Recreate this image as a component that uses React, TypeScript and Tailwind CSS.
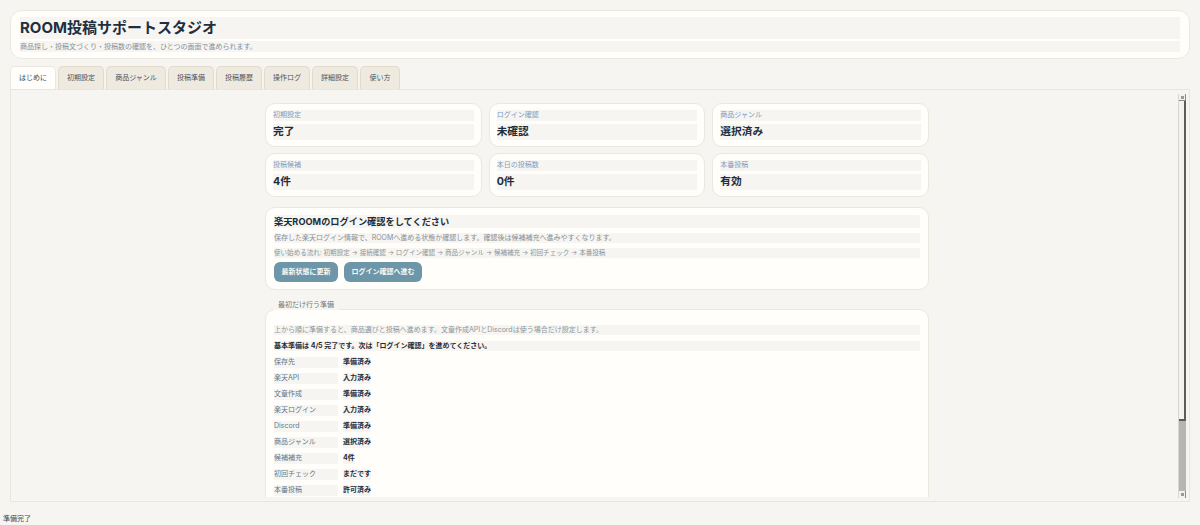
const FONT = "font-['Inter','Noto_Sans_CJK_JP',sans-serif]";

const stats = [
  ["初期設定", "完了"],
  ["ログイン確認", "未確認"],
  ["商品ジャンル", "選択済み"],
  ["投稿候補", "4件"],
  ["本日の投稿数", "0件"],
  ["本番投稿", "有効"],
];

const rows = [
  ["保存先", "準備済み"],
  ["楽天API", "入力済み"],
  ["文章作成", "準備済み"],
  ["楽天ログイン", "入力済み"],
  ["Discord", "準備済み"],
  ["商品ジャンル", "選択済み"],
  ["候補補充", "4件"],
  ["初回チェック", "まだです"],
  ["本番投稿", "許可済み"],
];

const tabs = [
  ["はじめに", "w-[46px]"],
  ["初期設定", "w-[46px]"],
  ["商品ジャンル", "w-[60px]"],
  ["投稿準備", "w-[46px]"],
  ["投稿履歴", "w-[46px]"],
  ["操作ログ", "w-[46px]"],
  ["詳細設定", "w-[46px]"],
  ["使い方", "w-[40px]"],
];

function Stat({ label, value }: { label: string; value: string }) {
  return (
    <div className="h-[44px] rounded-[10px] border border-[#ebe8df] bg-[#fffefb] px-[7px] pt-[6px]">
      <div className="h-[11px] bg-[#f6f5f1] text-[7px] leading-[9px] text-[#7f9cc2]">{label}</div>
      <div className="mt-[3px] h-[16px] bg-[#f6f5f1] text-[10.7px] font-bold leading-[16px] text-[#1e2d3b]">{value}</div>
    </div>
  );
}

export default function App() {
  return (
    <div className={`${FONT} flex h-[525px] w-[1200px] flex-col overflow-hidden bg-[#f6f5f1]`}>
      <header className="mx-[10px] mt-[10px] h-[49px] rounded-[12px] border border-[#ebe8df] bg-[#fffefb] px-[9px] pt-[6px]">
        <h1 className="h-[22px] bg-[#f6f5f1] text-[15px] font-bold leading-[22px] text-[#1e2f40]">ROOM投稿サポートスタジオ</h1>
        <p className="mt-[2px] h-[11px] bg-[#f6f5f1] text-[7px] leading-[11px] text-[#87909a]">
          商品探し・投稿文づくり・投稿数の確認を、ひとつの画面で進められます。
        </p>
      </header>

      <nav className="mx-[10px] mt-[7px] flex h-[23px] items-end gap-[2px]">
        {tabs.map(([t, w], i) => (
          <div
            key={t}
            className={`${w} flex items-center justify-center rounded-t-[5px] border border-b-0 text-[7px] ${
              i === 0
                ? "h-[23px] border-[#ebe8df] bg-[#fffefb] text-[#3a4650]"
                : "h-[23px] border-[#e2dbc9] bg-[#efeadf] text-[#4b5661]"
            }`}
          >
            {t}
          </div>
        ))}
      </nav>

      <main className="relative mx-[10px] h-[413px] border border-[#e9e6dc] bg-[#f6f5f1]">
        <div className="h-[407px] overflow-hidden">
          <div className="ml-[254px] flex w-[664px] flex-col pt-[13px]">
            <div className="grid grid-cols-3 gap-x-[7px] gap-y-[6px]">
              {stats.map(([l, v]) => (
                <Stat key={l} label={l} value={v} />
              ))}
            </div>

            <section className="mt-[10px] h-[83px] rounded-[10px] border border-[#ebe8df] bg-[#fffefb] px-[8px] pt-[7px]">
              <h2 className="h-[13px] bg-[#f6f5f1] text-[9.2px] font-bold leading-[13px] text-[#1e2d3b]">楽天ROOMのログイン確認をしてください</h2>
              <p className="mt-[5px] h-[10px] bg-[#f6f5f1] text-[7px] leading-[10px] text-[#87909a]">
                保存した楽天ログイン情報で、ROOMへ進める状態か確認します。確認後は候補補充へ進みやすくなります。
              </p>
              <p className="mt-[5px] h-[10px] bg-[#f6f5f1] text-[6.56px] leading-[10px] text-[#8d959c]">
                使い始める流れ: 初期設定 → 接続確認 → ログイン確認 → 商品ジャンル → 候補補充 → 初回チェック → 本番投稿
              </p>
              <div className="mt-[4px] flex gap-[6px]">
                <button className="h-[20px] w-[64px] rounded-[6px] bg-[#6d97a8] text-[7px] font-bold text-[#f8f8f4]">最新状態に更新</button>
                <button className="h-[20px] w-[78px] rounded-[6px] bg-[#6d97a8] text-[7px] font-bold text-[#f8f8f4]">ログイン確認へ進む</button>
              </div>
            </section>

            <div className="relative mt-[19px] h-[230px] rounded-t-[10px] border border-[#ebe8df] bg-[#fffefb] px-[8px] pt-[15px]">
              <div className="absolute -top-[10px] left-[7px] h-[10px] bg-[#f6f5f1] px-[5px] text-[7px] leading-[10px] text-[#6f7780]">最初だけ行う準備</div>
              <p className="h-[10px] bg-[#f6f5f1] text-[7px] leading-[10px] text-[#8d959c]">
                上から順に準備すると、商品選びと投稿へ進めます。文章作成APIとDiscordは使う場合だけ設定します。
              </p>
              <p className="mt-[6px] h-[10px] bg-[#f6f5f1] text-[7px] font-bold leading-[10px] text-[#1e2d3b]">
                基本準備は 4/5 完了です。次は「ログイン確認」を進めてください。
              </p>
              <div className="mt-[6px] flex flex-col gap-[5px]">
                {rows.map(([l, v]) => (
                  <div key={l} className="flex h-[11px] gap-[5px]">
                    <div className="w-[64px] bg-[#f6f5f1] text-[7px] leading-[9px] text-[#64778d]">{l}</div>
                    <div className="bg-[#f6f5f1] text-[7px] font-bold leading-[9px] text-[#1e2d3b]">{v}</div>
                  </div>
                ))}
              </div>
            </div>
          </div>
        </div>

        <div className="absolute right-[3px] top-[4px] flex h-[404px] w-[8px] flex-col border-l border-[#d6d6d2] bg-[#b5b5b3]">
          <div className="flex h-[7px] items-center justify-center border-r border-b border-[#8a8a8a] bg-[#f3f2ee]">
            <div className="size-[3px] bg-[#9a9a98]" />
          </div>
          <div className="h-[320px] border-r-2 border-b-2 border-[#5c5c5c] bg-[#f3f2ee]" />
          <div className="flex-1" />
          <div className="flex h-[7px] items-center justify-center border-r border-[#8a8a8a] bg-[#f3f2ee]">
            <div className="size-[3px] bg-[#9a9a98]" />
          </div>
        </div>
      </main>

      <footer className="mt-[12px] pl-[3px] text-[7px] leading-[10px] text-[#3f4850]">準備完了</footer>
    </div>
  );
}
